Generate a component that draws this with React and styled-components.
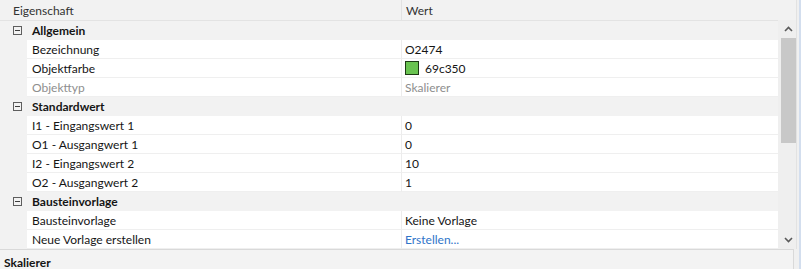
import React from "react";
import styled, { createGlobalStyle } from "styled-components";

const Global = createGlobalStyle`
  html, body { margin: 0; padding: 0; }
  body {
    background: #f0f0f0;
    font-family: "Lato", "Noto Sans", sans-serif;
    font-size: 12px;
    color: #1b1b1b;
    overflow: hidden;
  }
`;

const Frame = styled.div`
  width: 801px;
  height: 269px;
  display: flex;
  flex-direction: column;
  background: #f0f0f0;
  box-sizing: border-box;
  border-right: 2px solid #d3deee;
  overflow: hidden;
`;

const Main = styled.div`
  width: 796px;
  display: flex;
  flex-direction: row;
  border-right: 1px solid #e2e2e2;
  background: #f3f3f3;
`;

const GridCol = styled.div`
  width: 778px;
  display: flex;
  flex-direction: column;
`;

const Header = styled.div`
  height: 21px;
  display: grid;
  grid-template-columns: 402px 1fr;
  box-sizing: border-box;
  border-bottom: 1px solid #e3e3e3;
  background: #f2f2f2;
`;

const HeadCell = styled.div`
  display: flex;
  align-items: center;
  padding-left: ${(p) => p.$pad}px;
  color: #333333;
  border-right: ${(p) => (p.$divider ? "1px solid #e2e2e2" : "none")};
`;

const Row = styled.div`
  height: 19px;
  display: grid;
  grid-template-columns: 27px 375px 1fr;
  background: #f2f2f2;
`;

const Gutter = styled.div`
  display: flex;
  align-items: center;
  justify-content: flex-start;
  padding-left: 13px;
`;

const NameCell = styled.div`
  display: flex;
  align-items: center;
  padding-left: 5px;
  box-sizing: border-box;
  background: ${(p) => (p.$category ? "transparent" : "#ffffff")};
  border-bottom: ${(p) => (p.$category ? "none" : "1px solid #efefef")};
  border-right: ${(p) => (p.$category ? "none" : "1px solid #ececec")};
  font-weight: ${(p) => (p.$category ? 700 : 400)};
  color: ${(p) => (p.$muted ? "#8e8e8e" : "#151515")};
  white-space: nowrap;
`;

const ValueCell = styled.div`
  display: flex;
  align-items: center;
  gap: 6px;
  padding-left: 3px;
  box-sizing: border-box;
  background: ${(p) => (p.$category ? "transparent" : "#ffffff")};
  border-bottom: ${(p) => (p.$category ? "none" : "1px solid #efefef")};
  color: ${(p) => (p.$link ? "#2f74c9" : p.$muted ? "#8e8e8e" : "#151515")};
  white-space: nowrap;
`;

const Toggle = styled.span`
  width: 9px;
  height: 9px;
  box-sizing: border-box;
  border: 1px solid #5e5e5e;
  position: relative;
  &::after {
    content: "";
    position: absolute;
    left: 1px;
    right: 1px;
    top: 3px;
    height: 1px;
    background: #3e3e3e;
  }
`;

const Swatch = styled.span`
  width: 14px;
  height: 14px;
  box-sizing: border-box;
  background: #69c350;
  border: 1px solid #1d3a14;
`;

const Scroll = styled.div`
  width: 18px;
  display: flex;
  flex-direction: column;
  align-items: center;
  background: #f0f0f0;
`;

const ScrollHead = styled.div`
  height: 20px;
  width: 100%;
  background: #f2f2f2;
`;

const Track = styled.div`
  width: 100%;
  height: 229px;
  display: flex;
  flex-direction: column;
  align-items: center;
  background: #efefef;
  padding-left: 2px;
  box-sizing: border-box;
`;

const Arrow = styled.div`
  height: 18px;
  width: 15px;
  display: flex;
  align-items: center;
  justify-content: center;
`;

const Thumb = styled.div`
  width: 15px;
  height: 105px;
  background: #c8c8c8;
`;

const Filler = styled.div`
  flex: 1;
`;

const Gap = styled.div`
  height: 6px;
  width: 796px;
  background: #f0f0f0;
`;

const Desc = styled.div`
  width: 794px;
  flex: 1;
  box-sizing: border-box;
  border-top: 1px solid #d9d9d9;
  border-right: 1px solid #d9d9d9;
  background: #f3f3f3;
  padding: 5px 0 0 4px;
  font-weight: 700;
  color: #151515;
`;

const Chevron = ({ up }) => (
  <svg width="9" height="6" viewBox="0 0 9 6">
    <path
      d={up ? "M1 5 L4.5 1.5 L8 5" : "M1 1 L4.5 4.5 L8 1"}
      fill="none"
      stroke="#5a5a5a"
      strokeWidth="1.6"
    />
  </svg>
);

const rows = [
  { cat: "Allgemein" },
  { name: "Bezeichnung", value: "O2474" },
  { name: "Objektfarbe", value: "69c350", swatch: true },
  { name: "Objekttyp", value: "Skalierer", muted: true },
  { cat: "Standardwert" },
  { name: "I1 - Eingangswert 1", value: "0" },
  { name: "O1 - Ausgangwert 1", value: "0" },
  { name: "I2 - Eingangswert 2", value: "10" },
  { name: "O2 - Ausgangwert 2", value: "1" },
  { cat: "Bausteinvorlage" },
  { name: "Bausteinvorlage", value: "Keine Vorlage" },
  { name: "Neue Vorlage erstellen", value: "Erstellen...", link: true },
];

export default function App() {
  return (
    <>
      <Global />
      <Frame>
        <Main>
          <GridCol>
            <Header>
              <HeadCell $pad={13} $divider>Eigenschaft</HeadCell>
              <HeadCell $pad={4}>Wert</HeadCell>
            </Header>
            {rows.map((r, i) =>
              r.cat ? (
                <Row key={i}>
                  <Gutter>
                    <Toggle />
                  </Gutter>
                  <NameCell $category>{r.cat}</NameCell>
                  <ValueCell $category />
                </Row>
              ) : (
                <Row key={i}>
                  <Gutter />
                  <NameCell $muted={r.muted}>{r.name}</NameCell>
                  <ValueCell $muted={r.muted} $link={r.link}>
                    {r.swatch && <Swatch />}
                    {r.value}
                  </ValueCell>
                </Row>
              )
            )}
          </GridCol>
          <Scroll>
            <ScrollHead />
            <Track>
              <Arrow>
                <Chevron up />
              </Arrow>
              <Thumb />
              <Filler />
              <Arrow>
                <Chevron />
              </Arrow>
            </Track>
          </Scroll>
        </Main>
        <Gap />
        <Desc>Skalierer</Desc>
      </Frame>
    </>
  );
}
